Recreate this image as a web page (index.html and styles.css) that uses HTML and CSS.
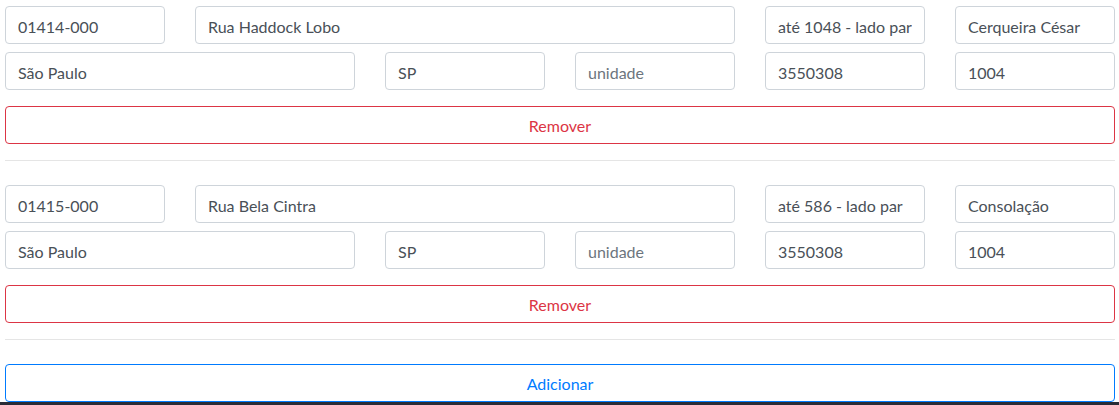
FILE: index.html
```html
<!DOCTYPE html>
<html lang="pt-BR">
<head>
<meta charset="utf-8">
<title>Endereços</title>
<link rel="stylesheet" href="styles.css">
</head>
<body>
<div class="page">
  <div class="block">
    <div class="grid">
      <input class="field c1" value="01414-000">
      <input class="field c3" value="Rua Haddock Lobo">
      <input class="field c1" value="até 1048 - lado par">
      <input class="field c1" value="Cerqueira César">
      <input class="field c2" value="São Paulo">
      <input class="field c1" value="SP">
      <input class="field c1" placeholder="unidade">
      <input class="field c1" value="3550308">
      <input class="field c1" value="1004">
    </div>
    <button class="btn btn-danger">Remover</button>
    <hr class="sep">
  </div>
  <div class="block">
    <div class="grid">
      <input class="field c1" value="01415-000">
      <input class="field c3" value="Rua Bela Cintra">
      <input class="field c1" value="até 586 - lado par">
      <input class="field c1" value="Consolação">
      <input class="field c2" value="São Paulo">
      <input class="field c1" value="SP">
      <input class="field c1" placeholder="unidade">
      <input class="field c1" value="3550308">
      <input class="field c1" value="1004">
    </div>
    <button class="btn btn-danger">Remover</button>
    <hr class="sep">
  </div>
  <button class="btn btn-primary">Adicionar</button>
</div>
<div class="taskbar"></div>
</body>
</html>
```
FILE: styles.css
```css
* { box-sizing: border-box; }
html, body { margin: 0; padding: 0; background: #fff; }
body {
  font-family: "Lato", "Open Sans", sans-serif;
  font-size: 16px;
  line-height: 1.5;
  color: #212529;
  overflow: hidden;
}
.page {
  width: 1110px;
  margin-left: 5px;
  padding-top: 6px;
}
.block {
  display: flex;
  flex-direction: column;
}
.grid {
  display: grid;
  grid-template-columns: repeat(6, 160px);
  column-gap: 30px;
  row-gap: 8px;
}
.c1 { grid-column: span 1; }
.c2 { grid-column: span 2; }
.c3 { grid-column: span 3; }
.field {
  display: block;
  width: 100%;
  height: 38px;
  padding: 7px 12px 5px;
  font-family: inherit;
  font-size: 16px;
  line-height: 1.5;
  color: #495057;
  background: #fff;
  border: 1px solid #ced4da;
  border-radius: 4px;
  outline: none;
}
.field::placeholder { color: #6c757d; opacity: 1; }
.btn {
  display: block;
  width: 100%;
  height: 38px;
  padding: 7px 12px 5px;
  font-family: inherit;
  font-size: 16px;
  line-height: 1.5;
  text-align: center;
  background: transparent;
  border: 1px solid;
  border-radius: 4px;
  cursor: pointer;
}
.block .btn { margin-top: 16px; }
.btn-danger { color: #dc3545; border-color: #dc3545; }
.btn-primary { color: #007bff; border-color: #007bff; }
.sep {
  margin: 16px 0 24px;
  border: 0;
  border-top: 1px solid rgba(0, 0, 0, 0.1);
  height: 0;
}
.taskbar {
  position: fixed;
  left: 0;
  right: 0;
  bottom: 0;
  height: 3px;
  background: #2a2b36;
}
```
